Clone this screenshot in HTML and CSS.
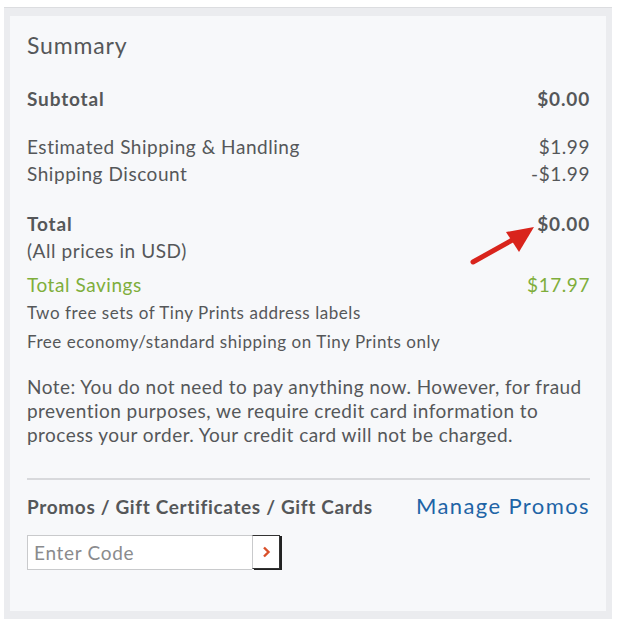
FILE: index.html
```html
<!DOCTYPE html>
<html>
<head>
<meta charset="utf-8">
<link rel="stylesheet" href="styles.css">
</head>
<body>
<div class="frame">
  <div class="panel">
    <h2 class="title">Summary</h2>
    <div class="row bold sub"><span>Subtotal</span><span>$0.00</span></div>
    <div class="group">
      <div class="row"><span>Estimated Shipping &amp; Handling</span><span>$1.99</span></div>
      <div class="row"><span>Shipping Discount</span><span>-$1.99</span></div>
    </div>
    <div class="total">
      <div class="row bold"><span>Total</span><span>$0.00</span></div>
      <div class="row"><span>(All prices in USD)</span></div>
      <svg class="arrow" width="70" height="44" viewBox="0 0 70 44">
        <line x1="3" y1="38" x2="46" y2="14" stroke="#d9241c" stroke-width="5" stroke-linecap="round"/>
        <polygon points="64,3 36,8 49,28" fill="#d9241c"/>
      </svg>
    </div>
    <div class="row savings"><span>Total Savings</span><span>$17.97</span></div>
    <p class="small">Two free sets of Tiny Prints address labels</p>
    <p class="small">Free economy/standard shipping on Tiny Prints only</p>
    <p class="note">Note: You do not need to pay anything now. However, for fraud prevention purposes, we require credit card information to process your order. Your credit card will not be charged.</p>
    <hr class="divider">
    <div class="promo-head">
      <span class="promo-title">Promos / Gift Certificates / Gift Cards</span>
      <a class="manage" href="#">Manage Promos</a>
    </div>
    <div class="code">
      <input class="code-input" type="text" placeholder="Enter Code">
      <button class="code-btn" type="button">
        <svg width="10" height="12" viewBox="0 0 10 12"><path d="M3 1.5 L7.5 6 L3 10.5" fill="none" stroke="#d9502a" stroke-width="2.4"/></svg>
      </button>
    </div>
  </div>
</div>
</body>
</html>
```
FILE: styles.css
```css
html, body {
  margin: 0;
  padding: 0;
  background: #fff;
}
body {
  font-family: Lato, "Open Sans", sans-serif;
  color: #555759;
  padding: 7px 11px 0 4px;
}
.frame {
  border-top: 1px solid #dcdde0;
  background: #ebecef;
  padding: 8px 6px 8px 6px;
  width: 596px;
}
.panel {
  background: #f7f8fa;
  padding: 16px 16px 41px 17px;
}
.title {
  margin: 0 0 27px;
  font-weight: 400;
  font-size: 23px;
  line-height: 26px;
  letter-spacing: 0.85px;
  color: #555759;
}
.row {
  display: flex;
  justify-content: space-between;
  font-size: 19px;
  line-height: 27px;
  letter-spacing: 0.55px;
}
.bold {
  font-weight: 700;
  letter-spacing: 0.85px;
}
.sub {
  margin-bottom: 21px;
}
.group {
  margin-bottom: 23px;
}
.total {
  position: relative;
  margin-bottom: 7px;
}
.total .row:last-child {
  line-height: 25px;
}
.arrow {
  position: absolute;
  left: 443px;
  top: 14px;
}
.savings {
  color: #7fae3b;
}
.small {
  margin: 0;
  font-size: 17px;
  line-height: 29px;
  letter-spacing: 0.55px;
}
.note {
  margin: 19px 0 0;
  font-size: 19px;
  line-height: 24px;
  letter-spacing: 0.45px;
}
.divider {
  margin: 31px 0 0;
  border: 0;
  border-top: 2px solid #d8d9dc;
}
.promo-head {
  display: flex;
  justify-content: space-between;
  align-items: baseline;
  margin-top: 12px;
}
.promo-title {
  font-weight: 700;
  font-size: 19px;
  letter-spacing: 0.65px;
}
.manage {
  color: #1e64a6;
  text-decoration: none;
  font-size: 22px;
  letter-spacing: 1.4px;
}
.code {
  display: flex;
  margin-top: 16px;
}
.code-input {
  box-sizing: border-box;
  width: 225px;
  height: 35px;
  border: 1px solid #c9cacc;
  border-right: 0;
  background: #fff;
  font-family: Lato, "Open Sans", sans-serif;
  font-size: 19px;
  letter-spacing: 0.7px;
  padding: 0 6px;
  color: #555;
  outline: none;
}
.code-input::placeholder {
  color: #8a8b8d;
}
.code-btn {
  box-sizing: border-box;
  width: 28px;
  height: 34px;
  padding: 0;
  background: #fff;
  border: 1px solid #333;
  border-left: 1px solid #c9cacc;
  box-shadow: 2px 1px 0 #222;
  display: flex;
  align-items: center;
  justify-content: center;
}
```
